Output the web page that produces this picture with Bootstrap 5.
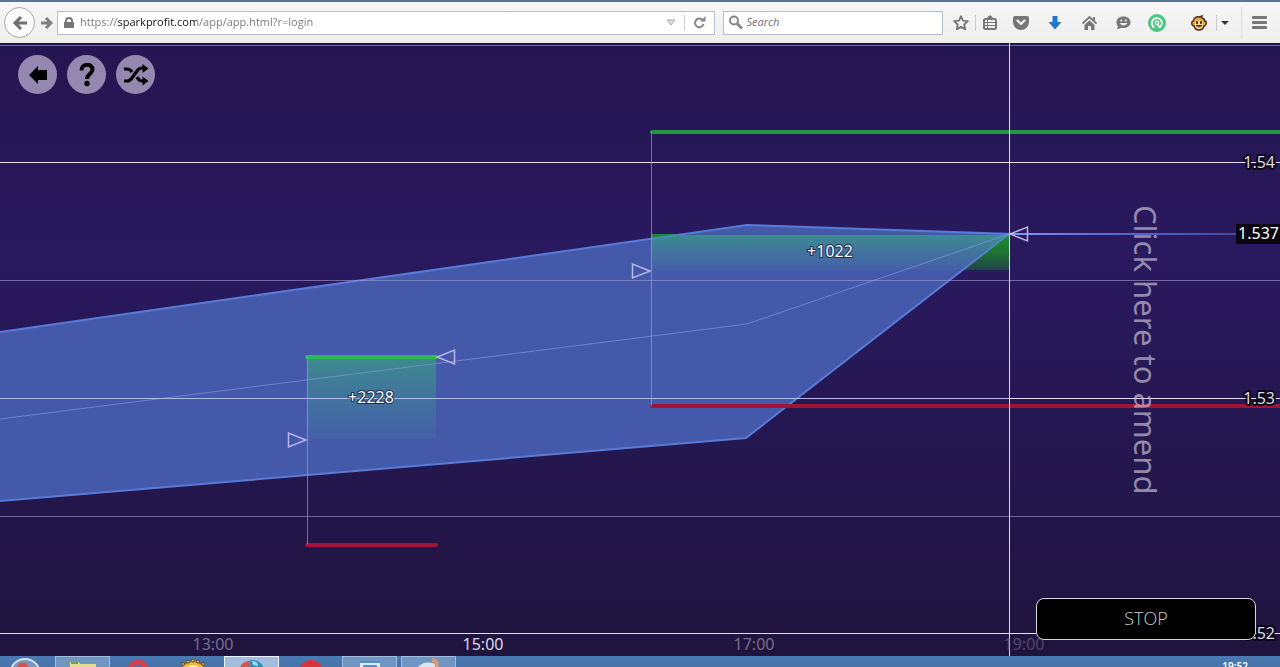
<!DOCTYPE html>
<html lang="en">
<head>
<meta charset="utf-8">
<meta name="viewport" content="width=device-width, initial-scale=1">
<title>Spark Profit</title>
<link href="https://cdn.jsdelivr.net/npm/bootstrap@5.3.0/dist/css/bootstrap.min.css" rel="stylesheet">
<script src="https://cdn.jsdelivr.net/npm/bootstrap@5.3.0/dist/js/bootstrap.bundle.min.js"></script>
<style>
body{font-family:"Noto Sans","Open Sans",sans-serif}
button{background:none;border:0;padding:0}
svg{display:block}
.browser-bar{height:43px;background:linear-gradient(#f6f6f6,#eeeeef);border-top:2px solid #5c7590;color:#777}
.field{height:24px;background:#fff;border:1px solid #b5bfca}
.field input{border:0;outline:0;background:none;font-size:11px;padding:0;color:#777;min-width:0}
.field-url{flex:3 1 0}
.field-search{flex:1 1 0}
.field-search input::placeholder{color:#777;font-style:italic;opacity:1}
.field .address{font-family:"Open Sans",sans-serif;font-size:11px;-webkit-text-fill-color:transparent;background:linear-gradient(90deg,#777 37px,#111 37px,#111 117px,#777 117px);-webkit-background-clip:text;background-clip:text}
.nav-back{width:31px;height:31px;border:1px solid #a8a8a8;border-radius:50%;background:#fbfbfb}
.nav-forward{width:22px;height:24px}
.tool{width:34px;height:28px}
.tool-sm{width:28px;height:28px}
.rule{width:1px;height:16px;background:#ccc}
.rule-tall{height:32px;background:#dcdcde}
.chart{background:linear-gradient(#241650,#29195f 35%,#1f143e)}
.chart-text{font-size:16px;fill:#ddd8e6}
.halo{paint-order:stroke;stroke:#0b0714;stroke-width:4px;stroke-linejoin:round}
.halo-thin{paint-order:stroke;stroke:#1b2a48;stroke-width:2px;stroke-linejoin:round;fill:#fff}
.controls{gap:10px;padding:12px 0 0 18px}
.round-btn{width:39px;height:39px;border-radius:50%;background:#9588b0;color:#000}
.side{width:220px;padding-top:58px}
.amend{writing-mode:vertical-rl;font-size:31px;line-height:44px;color:#c6bfd2b3}
.stop{height:42px;background:#000;border:1px solid #d8d8d8;border-radius:8px;color:#ccc;font-family:"Open Sans",sans-serif;font-size:18px;font-weight:300}
.taskbar{height:11px;background:linear-gradient(#4a7ab4,#4773a9)}
.task{width:55px;height:11px}
.task-open{background:#6f96c3;border:1px solid #a3bcda;border-bottom:0}
.task-active{background:#a2bddd;border-color:#eef4fb}
.clock{font-size:10px;line-height:12px;color:#fff;font-weight:600}
</style>
</head>
<body class="vh-100 d-flex flex-column overflow-hidden">
<header class="browser-bar d-flex align-items-center flex-shrink-0">
  <button class="nav-back d-flex align-items-center justify-content-center ms-1 flex-shrink-0" aria-label="Back"><svg width="16" height="16" fill="none" stroke="#707070" stroke-width="3"><path d="M15 8H3M9 2L3 8l6 6"/></svg></button>
  <button class="nav-forward d-flex align-items-center justify-content-center flex-shrink-0" aria-label="Forward"><svg width="13" height="14" fill="none" stroke="#808080" stroke-width="3"><path d="M1 7h9M6 2l5 5-5 5"/></svg></button>
  <div class="field field-url d-flex align-items-center">
    <svg class="mx-1 flex-shrink-0" width="14" height="12"><path fill="#777" d="M2 5h10v6H2z"/><path d="M4 6V4a3 3 0 0 1 6 0v2" fill="none" stroke="#777" stroke-width="2"/></svg>
    <input class="address flex-grow-1" aria-label="Address" value="https://sparkprofit.com/app/app.html?r=login">
    <button class="px-1" aria-label="History"><svg width="10" height="9"><path d="M1 2h8L5 7z" fill="#ddd" stroke="#aaa"/></svg></button>
    <span class="rule ms-1"></span>
    <button class="px-2" aria-label="Reload"><svg width="13" height="13" fill="none" stroke="#888" stroke-width="2"><path d="M9.500 4A4.300 4.300 0 1 0 10.500 8"/><path d="M7 5.500h5.500V0z" fill="#888" stroke="none"/></svg></button>
  </div>
  <div class="field field-search d-flex align-items-center ms-2">
    <svg class="mx-1 flex-shrink-0" width="15" height="15" fill="none" stroke="#888" stroke-width="2"><circle cx="6" cy="5.500" r="4"/><path d="M9 8.500l5 5" stroke-width="3"/></svg>
    <input class="flex-grow-1" aria-label="Search" placeholder="Search">
  </div>
  <nav class="d-flex align-items-center flex-shrink-0 ms-1" aria-label="Browser tools">
    <button class="tool-sm d-flex align-items-center justify-content-center" aria-label="Bookmark"><svg width="16" height="16" fill="none" stroke="#777" stroke-width="1.800" stroke-linejoin="round"><path d="M8 1.200l2 4.500 4.900.5-3.700 3.300 1.100 4.900L8 11.900l-4.300 2.500 1.100-4.900L1.100 6.200 6 5.700z"/></svg></button>
    <span class="rule"></span>
    <button class="tool-sm d-flex align-items-center justify-content-center" aria-label="Bookmarks list"><svg width="14" height="16" fill="none" stroke="#777"><rect x="1" y="4" width="12" height="10" rx="1.500" stroke-width="2"/><path d="M4 4V3h1l1-2h2l1 2h1v1" fill="#777"/><path d="M2 7.500h10M2 10.500h10M4.500 5v8"/></svg></button>
    <button class="tool d-flex align-items-center justify-content-center" aria-label="Pocket"><svg width="16" height="14"><path fill="#777" d="M2 0h12q2 0 2 2v4a8 8 0 0 1-16 0V2q0-2 2-2z"/><path d="M4.500 4.500L8 8l3.500-3.500" fill="none" stroke="#f3f3f3" stroke-width="2.200" stroke-linecap="round" stroke-linejoin="round"/></svg></button>
    <button class="tool d-flex align-items-center justify-content-center" aria-label="Downloads"><svg width="14" height="14"><path fill="#1f78cf" d="M4.500 0h5v6H13.500L7 13.500.5 6h4z"/></svg></button>
    <button class="tool d-flex align-items-center justify-content-center" aria-label="Home"><svg width="15" height="14"><path d="M.5 7.500L7.500 1l7 6.500" fill="none" stroke="#777" stroke-width="1.800"/><path fill="#777" d="M11 1h2v4l-2-2zM7.500 4.200L12.500 9v5H9v-4H6v4H2.500V9z"/></svg></button>
    <button class="tool d-flex align-items-center justify-content-center" aria-label="Chat"><svg width="15" height="14"><path fill="#777" d="M7.500.5c4.200 0 7 2.400 7 5.700s-2.800 5.800-7 5.800c-1 0-1.700-.1-2.500-.3L1 13.500l1-3.300C1 9.200.5 7.800.5 6.200.5 2.900 3.300.5 7.500.5z"/><path d="M3.500 7q4 5 8 0z" fill="#f3f3f3"/><circle cx="5.300" cy="4.500" r="1" fill="#f3f3f3"/><circle cx="9.700" cy="4.500" r="1" fill="#f3f3f3"/></svg></button>
    <button class="tool d-flex align-items-center justify-content-center" aria-label="Extension"><svg width="18" height="18"><circle cx="9" cy="9" r="9" fill="#4fc583"/><path d="M6.500 13.500A5 5 0 1 1 12 13Q10 13 10.500 10.500" fill="none" stroke="#fff" stroke-width="1.700"/><circle cx="9" cy="8.800" r="1.700" fill="none" stroke="#fff" stroke-width="1.200"/></svg></button>
    <button class="tool d-flex align-items-center justify-content-center ms-2" aria-label="Monkey"><svg width="16" height="16"><path d="M3 4q2-3 5-2l3-1-.5 1.500Q14 4 13.500 6q2 0 1.700 2.500T13 11q-1 4-5 4t-5-4Q1 11 .8 8.500T2.500 6z" fill="#e7a43b" stroke="#4b2d13" stroke-width="1.400"/><path d="M4 6q2-1.500 4 0 2-1.500 4 0v5q-1 3-4 3t-4-3z" fill="#f9d68a"/><path d="M6 6v3M10 6v3" stroke="#221508" stroke-width="1.500"/><path d="M5 10.500h6q-3 3-6 0z" fill="#fff" stroke="#4b2d13"/></svg></button>
    <span class="rule"></span>
    <button class="px-1" aria-label="Monkey menu"><svg width="8" height="6"><path fill="#333" d="M0 1h8L4 5z"/></svg></button>
    <span class="rule rule-tall ms-2"></span>
    <button class="tool d-flex align-items-center justify-content-center me-1" aria-label="Menu"><svg width="15" height="13" fill="#777"><rect width="15" height="3" rx="1"/><rect y="5" width="15" height="3" rx="1"/><rect y="10" width="15" height="3" rx="1"/></svg></button>
  </nav>
</header>

<main class="chart flex-grow-1 position-relative overflow-hidden d-flex justify-content-between">
  <svg class="position-absolute top-0 start-0 w-100 h-100" viewBox="0 43 1280 613" preserveAspectRatio="xMaxYMid slice" role="img" aria-label="Price chart">
    <defs>
      <linearGradient id="gain" x2="0" y2="1"><stop stop-color="#3a9d84" stop-opacity=".75"/><stop offset="1" stop-color="#3f8a98" stop-opacity=".15"/></linearGradient>
      <linearGradient id="gainDark" x2="0" y2="1"><stop stop-color="#198f2b"/><stop offset=".5" stop-color="#1e7530"/><stop offset="1" stop-color="#22424a"/></linearGradient>
      <linearGradient id="now" gradientUnits="userSpaceOnUse" x1="1009" x2="1240"><stop stop-color="#7f9cff"/><stop offset=".35" stop-color="#5872dd"/><stop offset="1" stop-color="#45479b"/></linearGradient>
    </defs>
    <path d="M0 43.500H1280" stroke="#18103a"/><path d="M0 45.500H1280" stroke="#70678c"/>
    <path d="M651 234h358v36H651z" fill="url(#gainDark)"/>
    <path d="M0 332L747 225 1009 234 746 438 0 501z" fill="#4559ab"/>
    <path d="M0 332L747 225 1009 234 746 438 0 501" fill="none" stroke="#587bd8" stroke-width="2"/>
    <path d="M651 239L681 235H1009L963 270H651z" fill="url(#gain)"/>
    <path d="M307 357h129v82H307z" fill="url(#gain)"/>
    <path d="M0 419L747 324 1009 234" fill="none" stroke="#8797df" stroke-opacity=".65"/>
    <path d="M0 280.500H1280M0 516.500H1280" stroke="#a59cc8" stroke-opacity=".6"/>
    <g stroke-width="4" stroke-linecap="round"><path d="M652 406H1280M307 545H436" stroke="#a01438"/>
    <path d="M652 132H1280" stroke="#269541"/>
    <path d="M307 357H436" stroke="#2dba55"/></g>
    <path d="M0 162.500H1280M1009 398.500H1280M0 633.500H1280" stroke="#e3dcf2"/>
    <path d="M0 398.500H1009" stroke="#b3bbe8"/>
    <path d="M651.500 132V406M307.500 357V544" stroke="#a79dc8" stroke-opacity=".65"/>
    <path d="M1009 234H1240" stroke="url(#now)" stroke-width="2"/>
    <path d="M1009.500 43V656" stroke="#e0d9ee"/>
    <g fill="none" stroke="#b6b8ea" stroke-width="1.500"><path d="M632.500 264V278L650 271zM288.500 433V447L306 440zM454.500 350V364L437 357z"/><path d="M1027.500 227V241L1010 234z" stroke="#c0b0dc"/></g>
    <g class="chart-text">
      <g text-anchor="end"><text class="halo" x="1275" y="168">1.54</text><text class="halo" x="1275" y="404">1.53</text><text class="halo" x="1275" y="639">1.52</text></g>
      <path d="M1236 224h44v20h-44z" fill="#08050f"/><text x="1279" y="239" text-anchor="end" fill="#fff">1.537</text>
      <g text-anchor="middle"><text class="halo-thin" x="830" y="257">+1022</text><text class="halo-thin" x="371" y="403">+2228</text>
      <text x="213" y="650" fill="#766e88">13:00</text><text x="483" y="650">15:00</text><text x="754" y="650" fill="#766e88">17:00</text><text x="1024" y="650" fill="#51466a">19:00</text></g>
    </g>
  </svg>
  <nav class="controls position-relative d-flex align-items-start" aria-label="Chart controls">
    <button class="round-btn d-flex align-items-center justify-content-center" aria-label="Back"><svg width="18" height="18"><path d="M0 9L9 0v4h9v10H9v4z"/></svg></button>
    <button class="round-btn d-flex align-items-center justify-content-center" aria-label="Help"><svg width="16" height="24" fill="none" stroke="#000" stroke-width="4"><path d="M2.500 7.500C2.500 0 13.500 0 13.500 6.500c0 4-5.500 4.500-5.500 9.500"/><circle cx="8" cy="20.500" r="2.700" fill="#000" stroke="none"/></svg></button>
    <button class="round-btn d-flex align-items-center justify-content-center" aria-label="Shuffle"><svg width="26" height="22" fill="none" stroke="#000" stroke-width="3.200"><path d="M1 17h3q3 0 5-3l5-7q2-3 5-3h2M1 5h3q3 0 5 3M14 13q2 4 5 4h2"/><path d="M19.500 0l6 4.500-6 4.500zM19.500 12.500l6 4.500-6 4.500z" fill="#000" stroke="none"/></svg></button>
  </nav>
  <div class="side position-relative d-flex flex-column align-items-center me-4">
    <button class="amend my-auto">Click here to amend</button>
    <button class="stop mb-3 w-100 flex-shrink-0">STOP</button>
  </div>
</main>

<footer class="taskbar d-flex flex-shrink-0 overflow-hidden">
  <button class="task d-flex justify-content-center" aria-label="Start"><svg width="34" height="11"><circle cx="14" cy="18" r="15" fill="#7897b8" stroke="#d3e3ef" stroke-width="2"/><path d="M6 11q2-5 8-4l4 4z" fill="#d7543c"/></svg></button>
  <button class="task task-open d-flex justify-content-center" aria-label="Files"><svg width="28" height="11"><path fill="#e7dc91" d="M1 5h9l1 2h16v4H1z"/><path fill="#65a85a" d="M2 5h7v2H2z"/></svg></button>
  <button class="task d-flex justify-content-center" aria-label="Opera"><svg width="24" height="11"><ellipse cx="12" cy="14" rx="8" ry="8" fill="none" stroke="#d5414d" stroke-width="5"/></svg></button>
  <button class="task d-flex justify-content-center" aria-label="Paw"><svg width="28" height="11"><path d="M4 12q10-9 20 0" fill="#fff1ae" stroke="#f0b432" stroke-width="3"/><g fill="#f0b432" stroke="#674524"><circle cx="4" cy="8" r="1.500"/><circle cx="9" cy="5.500" r="1.500"/><circle cx="14" cy="4.500" r="1.500"/><circle cx="19" cy="5.500" r="1.500"/><circle cx="24" cy="8" r="1.500"/></g></svg></button>
  <button class="task task-open task-active d-flex justify-content-center ms-1" aria-label="Firefox"><svg width="28" height="11"><circle cx="15" cy="14" r="11" fill="#2b8fc0"/><path d="M2 11q1-6 9-7l2 4q-4 0-4 3z" fill="#d5564d"/><path d="M14 4q6 0 6 5l-5-1z" fill="#9ed8ea"/></svg></button>
  <button class="task d-flex justify-content-center ms-1" aria-label="Recorder"><svg width="24" height="11"><circle cx="12" cy="16" r="12" fill="#d83340"/></svg></button>
  <button class="task task-open d-flex justify-content-center ms-1" aria-label="Notes"><svg width="22" height="11"><path fill="#dcecf8" d="M1 4h20v7H1z"/><path fill="#568fc8" d="M1 4h20v2H1zM4 8h14v3H4z"/></svg></button>
  <button class="task task-open d-flex justify-content-center ms-1" aria-label="Paint"><svg width="28" height="11"><path fill="#d9e8ee" d="M2 11q8-9 20-3v3z"/><path d="M17 3q5 0 5 8" fill="none" stroke="#d99a75" stroke-width="4"/></svg></button>
  <time class="clock ms-auto me-4 pe-2 pt-1">19:52</time>
</footer>
</body>
</html>
